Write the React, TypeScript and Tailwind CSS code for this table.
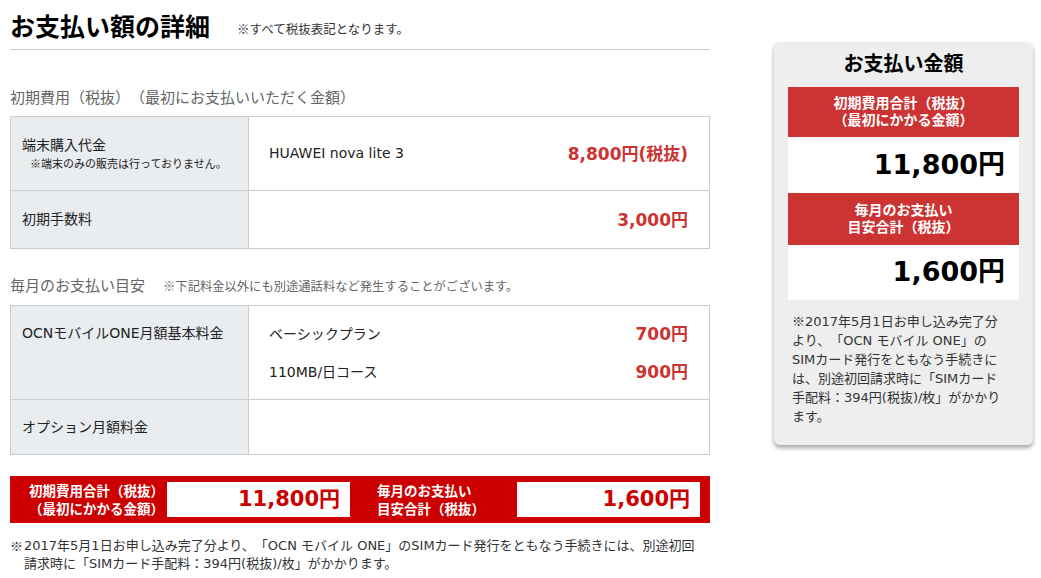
import React from "react";

const FONT = '"DejaVu Sans", "Noto Sans CJK JP", sans-serif';

// ※ looks too narrow in DejaVu, so draw it with the CJK face
function Kome() {
  return <span className="font-['Noto_Sans_CJK_JP',sans-serif]">※</span>;
}

function Price({ children }: { children: React.ReactNode }) {
  return (
    <span className="text-[17px] font-bold leading-[24px] text-[#cc3333]">
      {children}
    </span>
  );
}

function SummaryPanel() {
  return (
    <aside className="mt-[36px] h-[403px] w-[259px] rounded-[6px] bg-[#eeeeee] px-[14px] shadow-[0_3px_4px_rgba(0,0,0,0.35)]">
      <h2 className="pt-[9px] pb-[10px] text-center text-[20px] font-bold leading-[26px] text-black">
        お支払い金額
      </h2>
      <div className="flex h-[50px] flex-col items-center justify-center bg-[#cc3333] text-[14px] font-bold leading-[17px] text-white">
        <span>初期費用合計（税抜）</span>
        <span>（最初にかかる金額）</span>
      </div>
      <div className="flex h-[56px] items-center justify-end bg-white pr-[14px] text-[27px] font-bold text-black">
        11,800円
      </div>
      <div className="flex h-[52px] flex-col items-center justify-center bg-[#cc3333] text-[14px] font-bold leading-[17px] text-white">
        <span>毎月のお支払い</span>
        <span>目安合計（税抜）</span>
      </div>
      <div className="flex h-[55px] items-center justify-end bg-white pr-[14px] text-[27px] font-bold text-black">
        1,600円
      </div>
      <p className="pl-[4px] pr-[10px] pt-[11px] text-[13px] leading-[19px] text-[#333]">
        <Kome />
        2017年5月1日お申し込み完了分より、「OCN モバイル ONE」のSIMカード発行をともなう手続きには、別途初回請求時に「SIMカード手配料：394円(税抜)/枚」がかかります。
      </p>
    </aside>
  );
}

export default function App() {
  return (
    <div
      className="flex min-h-[578px] gap-[64px] bg-white pl-[10px] pt-[6px] text-[#222] [text-spacing-trim:space-all]"
      style={{ fontFamily: FONT }}
    >
      <main className="w-[700px]">
        <div className="flex h-[44px] items-center border-b border-[#cccccc]">
          <h1 className="text-[25px] font-bold leading-[34px] text-black">
            お支払い額の詳細
          </h1>
          <span className="ml-[27px] mt-[4px] text-[12.5px] text-[#333]">
            <Kome />
            すべて税抜表記となります。
          </span>
        </div>

        <h3 className="mt-[38px] mb-[8px] text-[15px] leading-[20px] text-[#666]">
          初期費用（税抜）（最初にお支払いいただく金額）
        </h3>
        <div className="border border-[#cccccc] text-[14px]">
          <div className="grid h-[74px] grid-cols-[238px_1fr] border-b border-[#cccccc]">
            <div className="border-r border-[#cccccc] bg-[#eaedf0] pl-[11px] pt-[18px]">
              <div className="leading-[20px]">端末購入代金</div>
              <div className="pl-[8px] text-[11px] leading-[16px]">
                <Kome />
                端末のみの販売は行っておりません。
              </div>
            </div>
            <div className="flex items-center justify-between pl-[20px] pr-[21px]">
              <span>HUAWEI nova lite 3</span>
              <Price>8,800円(税抜)</Price>
            </div>
          </div>
          <div className="grid h-[57px] grid-cols-[238px_1fr]">
            <div className="flex items-center border-r border-[#cccccc] bg-[#eaedf0] pl-[11px]">
              初期手数料
            </div>
            <div className="flex items-center justify-end pr-[21px]">
              <Price>3,000円</Price>
            </div>
          </div>
        </div>

        <div className="mt-[27px] mb-[9px] flex items-baseline">
          <h3 className="text-[15px] leading-[20px] text-[#666]">
            毎月のお支払い目安
          </h3>
          <span className="ml-[18px] text-[12.3px] text-[#666]">
            <Kome />
            下記料金以外にも別途通話料など発生することがございます。
          </span>
        </div>
        <div className="border border-[#cccccc] text-[14px]">
          <div className="grid h-[94px] grid-cols-[238px_1fr] border-b border-[#cccccc]">
            <div className="border-r border-[#cccccc] bg-[#eaedf0] pl-[11px] pt-[17px] leading-[20px]">
              OCNモバイルONE月額基本料金
            </div>
            <div className="flex flex-col gap-[14px] pl-[20px] pr-[21px] pt-[16px]">
              <div className="flex items-center justify-between">
                <span>ベーシックプラン</span>
                <Price>700円</Price>
              </div>
              <div className="flex items-center justify-between">
                <span>110MB/日コース</span>
                <Price>900円</Price>
              </div>
            </div>
          </div>
          <div className="grid h-[54px] grid-cols-[238px_1fr]">
            <div className="flex items-center border-r border-[#cccccc] bg-[#eaedf0] pl-[11px]">
              オプション月額料金
            </div>
            <div />
          </div>
        </div>

        <div className="mt-[21px] flex h-[47px] items-center bg-[#cc0000] px-[6px]">
          <div className="w-[148px] text-right text-[13.5px] font-bold leading-[18px] text-white">
            <div>初期費用合計（税抜）</div>
            <div>（最初にかかる金額）</div>
          </div>
          <div className="ml-[3px] flex h-[35px] w-[183px] items-center justify-end bg-white pr-[10px] text-[21px] font-bold text-[#cc0000]">
            11,800円
          </div>
          <div className="ml-[27px] w-[140px] text-[13.5px] font-bold leading-[18px] text-white">
            <div>毎月のお支払い</div>
            <div>目安合計（税抜）</div>
          </div>
          <div className="flex h-[35px] w-[183px] items-center justify-end bg-white pr-[10px] text-[21px] font-bold text-[#cc0000]">
            1,600円
          </div>
        </div>

        <div className="mt-[14px] flex text-[13px] leading-[18px] text-[#333]">
          <span className="w-[14px] shrink-0">
            <Kome />
          </span>
          <p className="pr-[12px]">
            2017年5月1日お申し込み完了分より、「OCN モバイル ONE」のSIMカード発行をともなう手続きには、別途初回請求時に「SIMカード手配料：394円(税抜)/枚」がかかります。
          </p>
        </div>
      </main>
      <SummaryPanel />
    </div>
  );
}
